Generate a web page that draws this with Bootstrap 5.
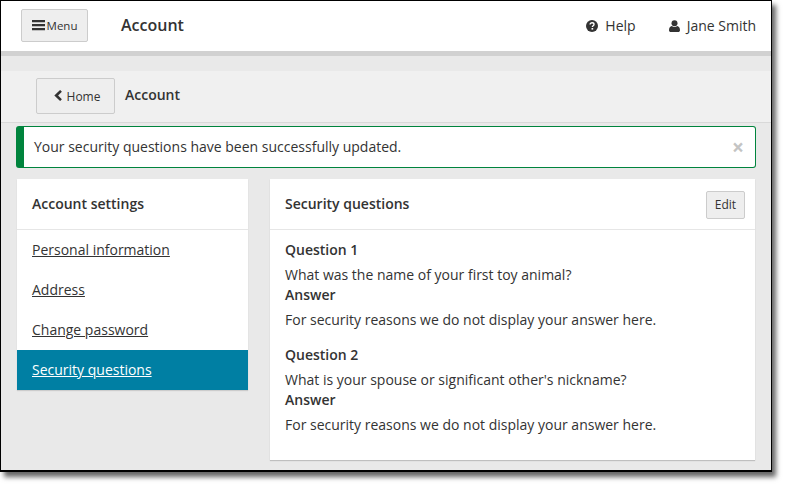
<!DOCTYPE html>
<html lang="en"><head><meta charset="utf-8"><title>Account</title>
<link href="https://cdn.jsdelivr.net/npm/bootstrap@5.3.0/dist/css/bootstrap.min.css" rel="stylesheet">
<style>
html,body{margin:0;height:486px;overflow:hidden;background:#fff}
body{font-family:"Open Sans","Liberation Sans",sans-serif;font-size:14px;color:#333;line-height:20px}
.shot{width:772px;height:472px;border:1px solid #000;border-width:1px 1px 2px 1px;background:#e9e9e9;box-shadow:4px 5px 5px rgba(0,0,0,.6);overflow:hidden}
.topbar{height:55px;background:#fff;border-bottom:5px solid #d1d1d1;padding:0 15px 2px 20px}
.menubtn{width:67px;height:33px;background:#eee;border:1px solid #ccc;border-radius:2px;font-size:11.500px;color:#333;padding:2px 0 0;gap:2px}
.menubtn svg{margin-top:-2px}
.topttl{font-size:16px;font-weight:600;margin-left:33px;color:#333}
.toprt{padding-top:2px}
.toplink{color:#333;gap:7px}
.subbar{margin-top:15px;height:52px;background:#f0f0f0;border-bottom:1px solid #d9d9d9;padding:0 0 2px 35px}
.homebtn{width:79px;height:36px;background:#eee;border:1px solid #ccc;border-radius:2px;font-size:12px;color:#333;padding:2px 0 0 3px;gap:4px}
.homebtn svg{margin-top:-2px}
.subttl{font-weight:600;margin-left:10px;color:#333;padding-bottom:2px}
.okalert{margin:3px 15px 0 15px;height:42px;background:#fff;border:1px solid #00843d;border-left-width:8px;border-radius:3px;padding:0 10px 0 10px;color:#333}
.okx{font-size:21px;font-weight:700;color:#c4c4c4;line-height:1;width:14px;background:none;border:0;padding:0}
.cols{margin:11px 16px 0 16px;gap:22px;align-items:flex-start}
.sidebox{width:231px;background:#fff;box-shadow:0 1px 1px rgba(0,0,0,.12)}
.boxhead{height:51px;border-bottom:1px solid #e6e6e6;padding-left:15px;font-weight:600;color:#333}
.sideitem{display:block;height:40px;line-height:40px;padding-left:15px;color:#333;text-decoration:underline}
.sideitem.on{background:#007fa3;color:#fff}
.mainbox{width:485px;height:281px;background:#fff;box-shadow:0 1px 1px rgba(0,0,0,.18)}
.mainbox .boxhead{padding-right:10px}
.editbtn{width:39px;height:28px;background:#eee;border:1px solid #ccc;border-radius:2px;font-size:12px;color:#333;padding:0;margin-top:2px}
.qa{padding:10px 15px 0 15px}
.qa b{font-weight:600;display:block;height:20px}
.qa p{margin:0}
.ln{height:25px;padding-top:5px}
.gapq{height:15px}
</style></head><body>
<div class="shot d-flex flex-column">
<header class="topbar d-flex align-items-center">
<button class="menubtn d-flex align-items-center justify-content-center" type="button"><svg width="13" height="12" viewBox="0 0 13 12"><path fill="#333" d="M0 1h13v2.200H0zM0 5h13v2.200H0zM0 9h13v2.200H0z"/></svg><span>Menu</span></button>
<div class="topttl">Account</div>
<div class="toprt ms-auto d-flex align-items-center">
<a class="toplink d-flex align-items-center text-decoration-none" href="#"><svg width="12" height="12" viewBox="0 0 12 12"><circle cx="6" cy="6" r="6" fill="#333"/><path d="M4.100 4.600c0-1.100.9-1.800 2-1.800s1.900.7 1.900 1.600c0 1.400-1.600 1.300-1.600 2.500" fill="none" stroke="#fff" stroke-width="1.400"/><rect x="5.500" y="8" width="1.700" height="1.600" fill="#fff"/></svg><span>Help</span></a>
<a class="toplink d-flex align-items-center text-decoration-none" style="margin-left:33px" href="#"><svg width="11" height="12" viewBox="0 0 11 12"><circle cx="5.500" cy="3.200" r="3" fill="#333"/><path fill="#333" d="M0 10.200C0 7.800 1.200 6.200 2.800 6c.8.600 1.700.9 2.700.9s1.900-.3 2.700-.9c1.600.2 2.800 1.800 2.800 4.200 0 1.100-.8 1.800-1.800 1.800H1.800C.8 12 0 11.300 0 10.200z"/></svg><span>Jane Smith</span></a>
</div>
</header>
<div class="subbar d-flex align-items-center">
<button class="homebtn d-flex align-items-center justify-content-center" type="button"><svg width="9" height="11" viewBox="0 0 9 11"><path d="M7 .9 2.200 5.500 7 10.100" fill="none" stroke="#333" stroke-width="2.600"/></svg><span>Home</span></button>
<div class="subttl">Account</div>
</div>
<div class="okalert d-flex align-items-center justify-content-between" role="alert"><span>Your security questions have been successfully updated.</span><button class="okx" type="button">×</button></div>
<div class="cols d-flex">
<nav class="sidebox">
<div class="boxhead d-flex align-items-center">Account settings</div>
<a class="sideitem" href="#">Personal information</a>
<a class="sideitem" href="#">Address</a>
<a class="sideitem" href="#">Change password</a>
<a class="sideitem on" href="#">Security questions</a>
</nav>
<main class="mainbox">
<div class="boxhead d-flex align-items-center justify-content-between"><span>Security questions</span><button class="editbtn" type="button">Edit</button></div>
<div class="qa">
<b>Question 1</b>
<p class="ln">What was the name of your first toy animal?</p>
<b>Answer</b>
<p class="ln">For security reasons we do not display your answer here.</p>
<div class="gapq"></div>
<b>Question 2</b>
<p class="ln">What is your spouse or significant other's nickname?</p>
<b>Answer</b>
<p class="ln">For security reasons we do not display your answer here.</p>
</div>
</main>
</div>
</div>
<script src="https://cdn.jsdelivr.net/npm/bootstrap@5.3.0/dist/js/bootstrap.bundle.min.js"></script>
</body></html>
